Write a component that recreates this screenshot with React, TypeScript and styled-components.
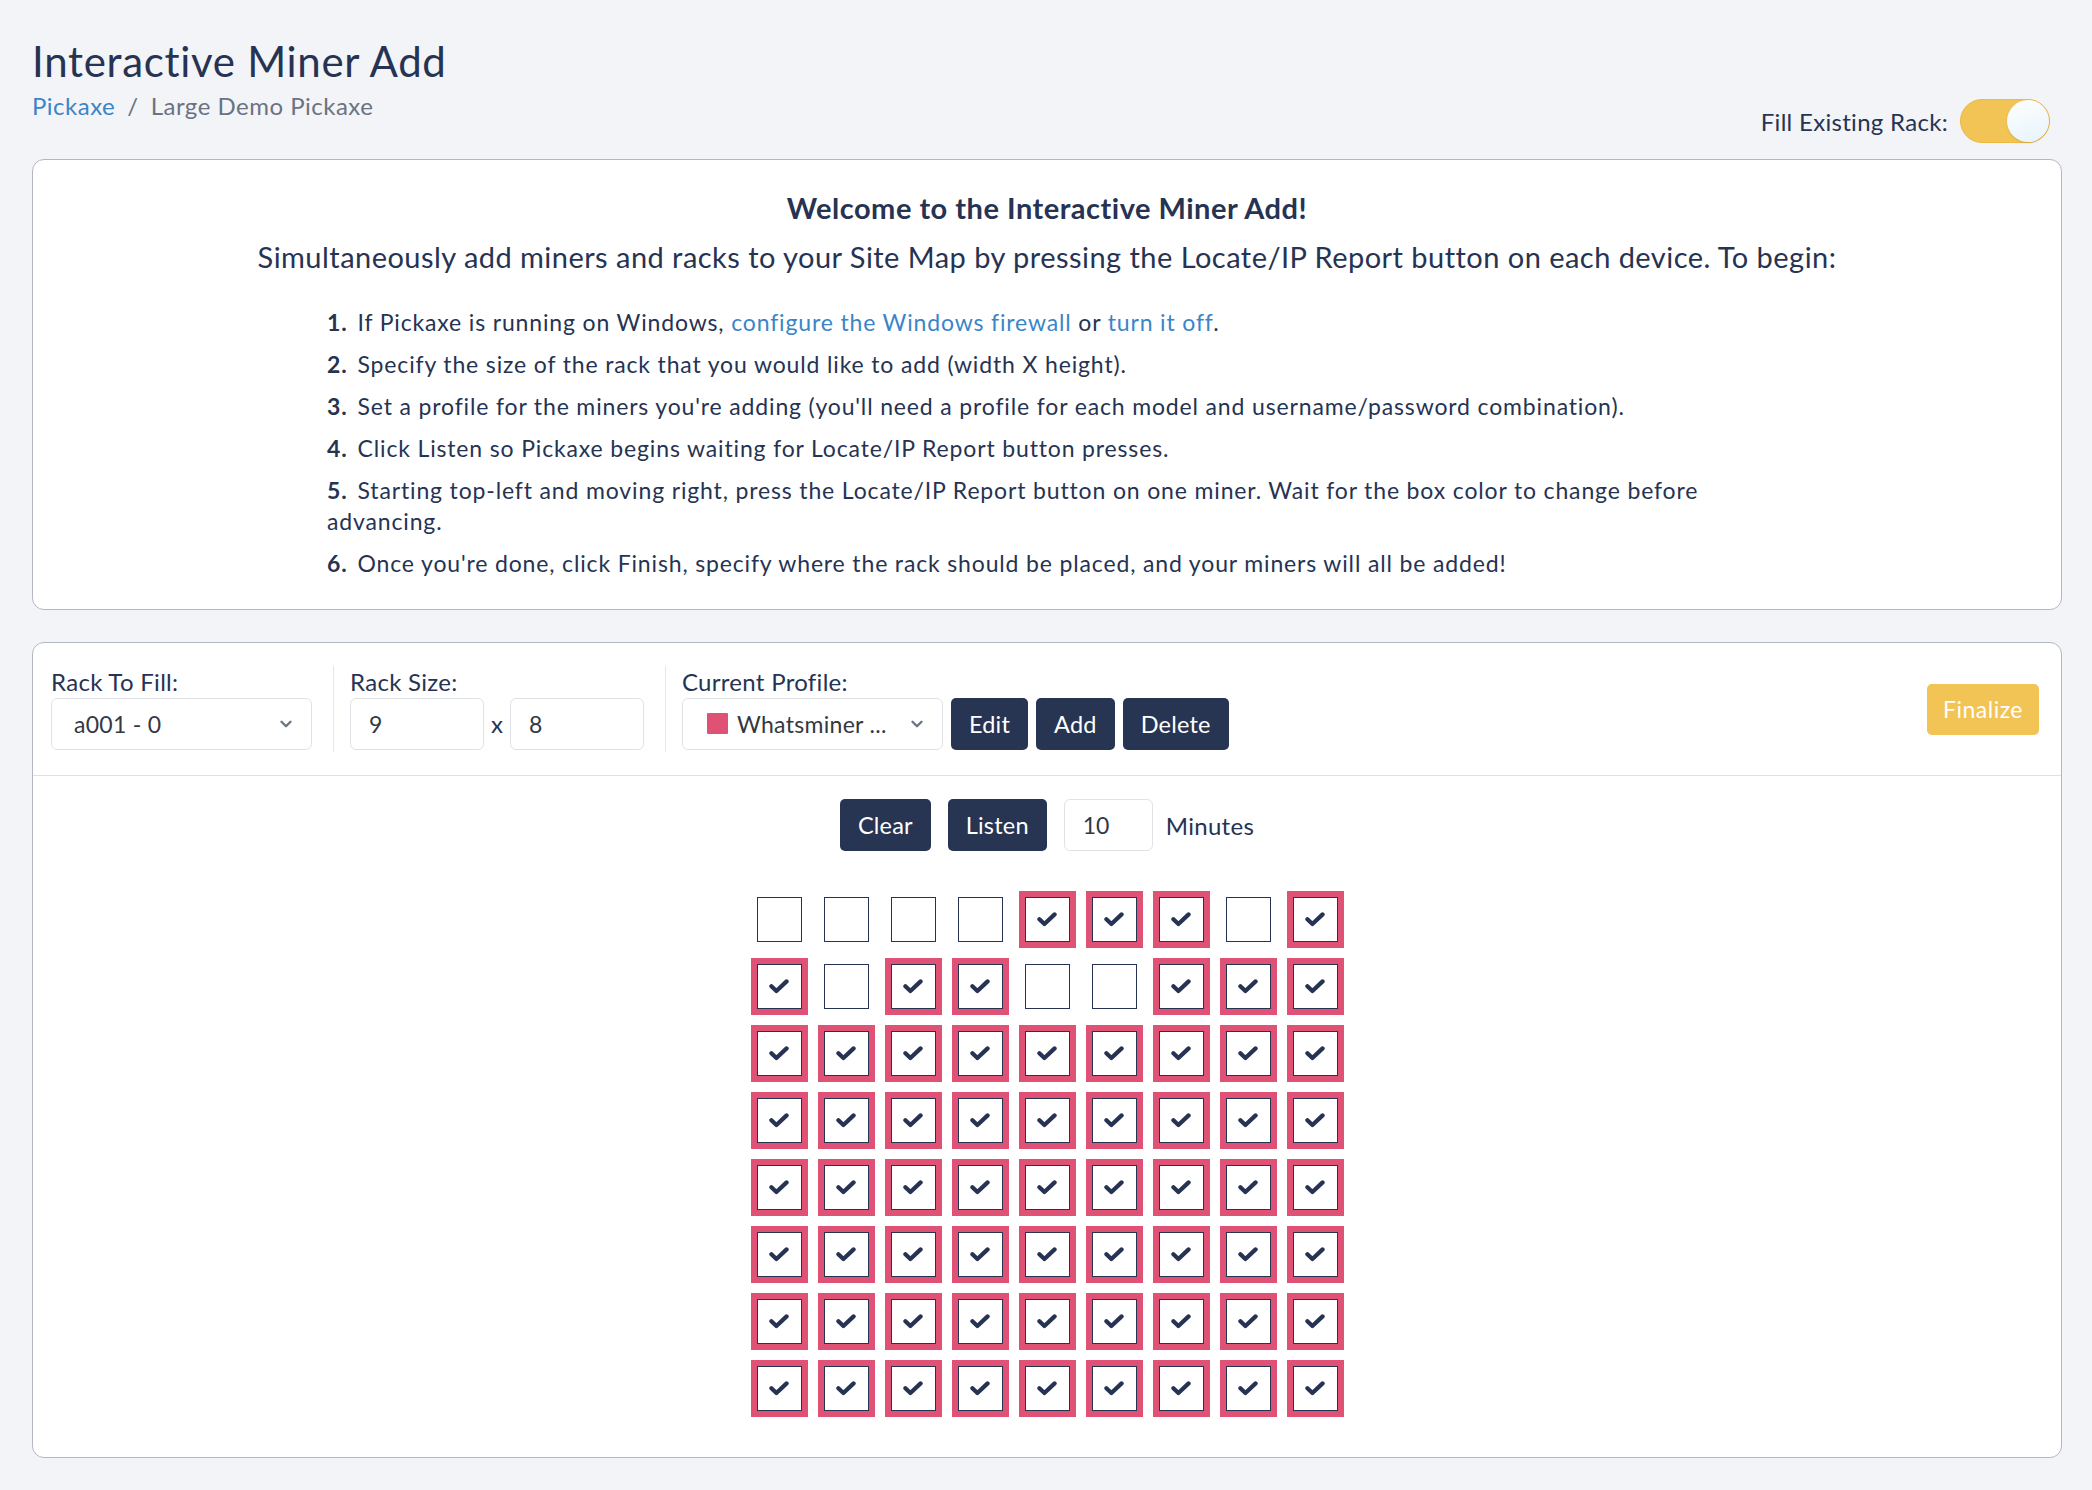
import React from 'react';
import styled, { createGlobalStyle } from 'styled-components';
import { ChevronDown } from 'lucide-react';

const navy = '#263352';
const pink = '#e05275';
const gold = '#f2c355';

const GlobalStyle = createGlobalStyle`
  html, body {
    margin: 0;
    padding: 0;
    background: #f3f4f8;
  }
  body {
    font-family: Lato, "Noto Sans", sans-serif;
    color: ${navy};
  }
  * {
    box-sizing: border-box;
  }
`;

const Page = styled.div`
  padding: 37px 30px 32px 32px;
  min-height: 1490px;
`;

const Header = styled.header`
  display: flex;
  justify-content: space-between;
  align-items: flex-end;
  padding-right: 12px;
  margin-bottom: 16px;
`;

const TitleBlock = styled.div`
  margin-bottom: 24px;
`;

const Title = styled.h1`
  margin: 0;
  font-size: 42px;
  line-height: 48px;
  letter-spacing: 0.7px;
  font-weight: 400;
  color: ${navy};
`;

const Breadcrumb = styled.div`
  margin-top: 7px;
  font-size: 24px;
  line-height: 27px;
  letter-spacing: 0.5px;
  color: #6b7280;
  display: flex;
  gap: 12px;
`;

const Crumb = styled.a`
  color: #3a85c8;
  text-decoration: none;
`;

const ToggleRow = styled.label`
  display: flex;
  align-items: center;
  gap: 12px;
  font-size: 24px;
  letter-spacing: 0.3px;
  color: ${navy};
`;

const Toggle = styled.span<{ $on: boolean }>`
  position: relative;
  width: 90px;
  height: 44px;
  border-radius: 22px;
  background: ${p => (p.$on ? gold : '#d5d9e0')};
  border: 1px solid ${p => (p.$on ? '#ecb942' : '#c5cad2')};
`;

const Knob = styled.span<{ $on: boolean }>`
  position: absolute;
  top: 0;
  ${p => (p.$on ? 'right: 0;' : 'left: 0;')}
  width: 42px;
  height: 42px;
  border-radius: 50%;
  background: linear-gradient(160deg, #ffffff, #e6f3fb);
  box-shadow: 0 1px 2px rgba(0, 0, 0, 0.12);
`;

const Card = styled.section`
  background: #fff;
  border: 1px solid #b3b7c1;
  border-radius: 12px;
`;

const Intro = styled(Card)`
  padding: 31px 32px 30px;
  margin-bottom: 32px;
`;

const Welcome = styled.h2`
  margin: 0;
  text-align: center;
  font-size: 29px;
  line-height: 34px;
  letter-spacing: 0.5px;
  font-weight: 700;
`;

const Lead = styled.p`
  margin: 14px 0 32px;
  text-align: center;
  font-size: 29px;
  line-height: 36px;
  letter-spacing: 0.46px;
`;

const Steps = styled.ol`
  list-style: none;
  margin: 0 auto;
  padding: 0;
  max-width: 1440px;
`;

const Step = styled.li`
  font-size: 23px;
  line-height: 31px;
  letter-spacing: 0.85px;
  & + & {
    margin-top: 11px;
  }
`;

const Num = styled.b`
  font-weight: 700;
  margin-right: 10px;
`;

const Link = styled.a`
  color: #3a85c8;
  text-decoration: none;
`;

const Toolbar = styled.div`
  display: flex;
  align-items: center;
  padding: 23px 22px 23px 18px;
  border-bottom: 1px solid #dde1e6;
`;

const Field = styled.div`
  display: flex;
  flex-direction: column;
  gap: 3px;
`;

const Label = styled.span`
  font-size: 24px;
  line-height: 26px;
  letter-spacing: 0.3px;
`;

const Row = styled.div<{ $gap: number }>`
  display: flex;
  align-items: center;
  gap: ${p => p.$gap}px;
`;

const Divider = styled.span`
  align-self: flex-end;
  width: 1px;
  height: 86px;
  background: #e3e6ea;
  margin: 0 16px 0 21px;
`;

const Select = styled.div<{ $width: number; $padLeft: number }>`
  width: ${p => p.$width}px;
  height: 52px;
  border: 1px solid #dfe3e8;
  border-radius: 6px;
  display: flex;
  align-items: center;
  gap: 9px;
  padding: 0 16px 0 ${p => p.$padLeft}px;
  font-size: 23px;
  letter-spacing: 0.3px;
  color: #333842;
  background: #fff;
`;

const SelectText = styled.span`
  flex: 1;
  white-space: nowrap;
`;

const Swatch = styled.span`
  width: 21px;
  height: 21px;
  background: ${pink};
  border-radius: 1px;
`;

const Input = styled.input<{ $width: number }>`
  width: ${p => p.$width}px;
  height: 52px;
  border: 1px solid #dfe3e8;
  border-radius: 6px;
  padding: 0 18px;
  font-family: inherit;
  font-size: 23px;
  color: #333842;
  outline: none;
`;

const Times = styled.span`
  font-size: 24px;
  color: ${navy};
`;

const Button = styled.button`
  height: 52px;
  padding: 0 18px;
  border: none;
  border-radius: 5px;
  background: #273552;
  color: #fff;
  font-family: inherit;
  font-size: 23.5px;
  letter-spacing: 0.2px;
`;

const Finalize = styled(Button)`
  margin-left: auto;
  height: 51px;
  padding: 0 16px;
  background: ${gold};
  font-size: 23px;
  letter-spacing: 0.5px;
`;

const Listener = styled.div`
  padding: 23px 0 40px;
  display: flex;
  flex-direction: column;
  align-items: center;
  gap: 40px;
`;

const Controls = styled.div`
  display: flex;
  align-items: center;
  gap: 17px;
`;

const Minutes = styled.span`
  font-size: 24px;
  letter-spacing: 0.3px;
  margin-left: -4px;
`;

const Grid = styled.div<{ $cols: number }>`
  display: grid;
  grid-template-columns: repeat(${p => p.$cols}, 57px);
  gap: 10px;
`;

const Cell = styled.div<{ $filled: boolean }>`
  width: 57px;
  height: 57px;
  border: 6px solid ${p => (p.$filled ? pink : 'transparent')};
  display: flex;
`;

const Box = styled.div`
  flex: 1;
  border: 1.5px solid ${navy};
  background: #fff;
  display: flex;
  align-items: center;
  justify-content: center;
  color: ${navy};
`;

const Check = () => (
  <svg width="20" height="15" viewBox="0 0 20 15" aria-hidden="true">
    <polyline
      points="2.4,7.2 7.4,12 17.6,2.4"
      fill="none"
      stroke="currentColor"
      strokeWidth="4.2"
      strokeLinecap="round"
      strokeLinejoin="round"
    />
  </svg>
);

const rack = [
  '000011101',
  '101100111',
  '111111111',
  '111111111',
  '111111111',
  '111111111',
  '111111111',
  '111111111',
];

export default function App() {
  return (
    <>
      <GlobalStyle />
      <Page>
        <Header>
          <TitleBlock>
            <Title>Interactive Miner Add</Title>
            <Breadcrumb>
              <Crumb href="#">Pickaxe</Crumb>
              <span>/</span>
              <span>Large Demo Pickaxe</span>
            </Breadcrumb>
          </TitleBlock>
          <ToggleRow>
            Fill Existing Rack:
            <Toggle $on>
              <Knob $on />
            </Toggle>
          </ToggleRow>
        </Header>

        <Intro>
          <Welcome>Welcome to the Interactive Miner Add!</Welcome>
          <Lead>
            Simultaneously add miners and racks to your Site Map by pressing the Locate/IP Report
            button on each device. To begin:
          </Lead>
          <Steps>
            <Step>
              <Num>1.</Num>If Pickaxe is running on Windows,{' '}
              <Link href="#">configure the Windows firewall</Link> or <Link href="#">turn it off</Link>.
            </Step>
            <Step>
              <Num>2.</Num>Specify the size of the rack that you would like to add (width X height).
            </Step>
            <Step>
              <Num>3.</Num>Set a profile for the miners you're adding (you'll need a profile for each
              model and username/password combination).
            </Step>
            <Step>
              <Num>4.</Num>Click Listen so Pickaxe begins waiting for Locate/IP Report button presses.
            </Step>
            <Step>
              <Num>5.</Num>Starting top-left and moving right, press the Locate/IP Report button on one
              miner. Wait for the box color to change before advancing.
            </Step>
            <Step>
              <Num>6.</Num>Once you're done, click Finish, specify where the rack should be placed, and
              your miners will all be added!
            </Step>
          </Steps>
        </Intro>

        <Card>
          <Toolbar>
            <Field>
              <Label>Rack To Fill:</Label>
              <Select $width={261} $padLeft={22}>
                <SelectText>a001 - 0</SelectText>
                <ChevronDown size={18} strokeWidth={3.2} color="#6c7783" />
              </Select>
            </Field>
            <Divider />
            <Field>
              <Label>Rack Size:</Label>
              <Row $gap={7}>
                <Input $width={134} defaultValue="9" />
                <Times>x</Times>
                <Input $width={134} defaultValue="8" />
              </Row>
            </Field>
            <Divider />
            <Field>
              <Label>Current Profile:</Label>
              <Row $gap={8}>
                <Select $width={261} $padLeft={24}>
                  <Swatch />
                  <SelectText>Whatsminer ...</SelectText>
                  <ChevronDown size={18} strokeWidth={3.2} color="#6c7783" />
                </Select>
                <Button>Edit</Button>
                <Button>Add</Button>
                <Button>Delete</Button>
              </Row>
            </Field>
            <Finalize>Finalize</Finalize>
          </Toolbar>

          <Listener>
            <Controls>
              <Button>Clear</Button>
              <Button>Listen</Button>
              <Input $width={89} defaultValue="10" />
              <Minutes>Minutes</Minutes>
            </Controls>
            <Grid $cols={9}>
              {rack.flatMap((row, r) =>
                row.split('').map((v, c) => (
                  <Cell key={`${r}-${c}`} $filled={v === '1'}>
                    <Box>{v === '1' && <Check />}</Box>
                  </Cell>
                ))
              )}
            </Grid>
          </Listener>
        </Card>
      </Page>
    </>
  );
}
